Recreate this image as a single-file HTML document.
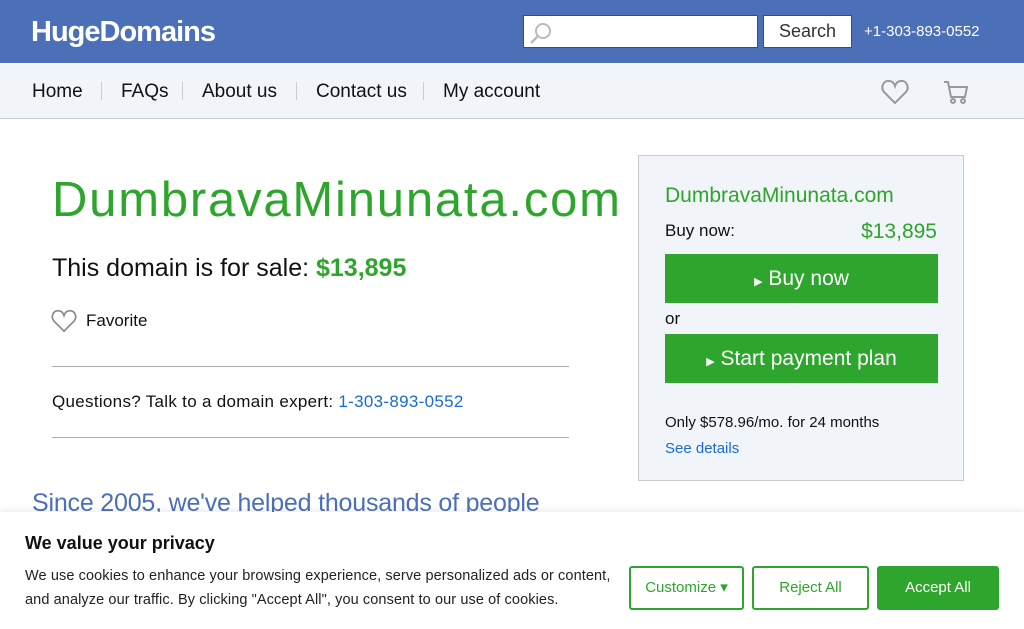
<!DOCTYPE html>
<html><head><meta charset="utf-8"><style>
*{margin:0;padding:0;box-sizing:border-box}
body{width:1024px;height:629px;overflow:hidden;font-family:"Liberation Sans",sans-serif;background:#fff;position:relative;color:#111}
.top{position:absolute;left:0;top:0;width:1024px;height:63px;background:#4b70b8}
.logo{position:absolute;left:31px;top:16px;color:#fff;font-weight:bold;font-size:29px;letter-spacing:-1px}
.sbox{position:absolute;left:523px;top:15px;width:235px;height:33px;background:#fff;border:1px solid #2d4f8f}
.sbtn{position:absolute;left:763px;top:15px;width:89px;height:33px;background:#fff;border:1px solid #2d4f8f;font-size:18px;text-align:center;line-height:31px;color:#333}
.phone{position:absolute;left:864px;top:23px;color:#fff;font-size:15px}
.nav{position:absolute;left:0;top:63px;width:1024px;height:56px;background:#f1f4f8;border-bottom:1px solid #c8ccd2}
.nav span{position:absolute;top:18px;font-size:19px;color:#111}
.sep{position:absolute;top:82px;width:1px;height:18px;background:#ccc}
h1{position:absolute;left:52px;top:172px;font-size:49px;font-weight:normal;color:#2ea52c;letter-spacing:1.8px}
.sale{position:absolute;left:52px;top:254px;font-size:25px}
.sale b{color:#2ea52c}
.fav{position:absolute;left:86px;top:311px;font-size:17px}
.hr{position:absolute;left:52px;width:517px;height:1px;background:#aaa}
.q{position:absolute;left:52px;top:392px;font-size:17px;letter-spacing:0.3px}
.q a{color:#1a6bd6;text-decoration:none}
.since{position:absolute;left:32px;top:489px;font-size:25px;color:#4b70b8;letter-spacing:-0.2px}
.card{position:absolute;left:638px;top:155px;width:326px;height:326px;background:#f1f4f8;border:1px solid #c8ccd2}
.card .d{position:absolute;left:26px;top:28px;font-size:21px;color:#2ea52c}
.card .bn{position:absolute;left:26px;top:65px;font-size:17px}
.card .pr{position:absolute;right:26px;top:64px;font-size:21px;color:#2ea52c}
.gb{position:absolute;left:26px;width:273px;height:49px;background:#2ea52c;color:#fff;font-size:21px;text-align:center;line-height:49px}
.card .or{position:absolute;left:26px;top:153px;font-size:17px}
.card .only{position:absolute;left:26px;top:258px;font-size:15px}
.card .see{position:absolute;left:26px;top:284px;font-size:15px;color:#1a6bd6}
.cookie{position:absolute;left:0;top:512px;width:1024px;height:117px;background:#fff;box-shadow:0 -2px 6px rgba(0,0,0,.08)}
.cookie h3{position:absolute;left:25px;top:21px;font-size:18px}
.cookie p{position:absolute;left:25px;top:52px;font-size:14.5px;line-height:24px;color:#222;width:600px;letter-spacing:0.1px}
.cb{position:absolute;top:54px;height:44px;border:2px solid #2ea52c;border-radius:3px;color:#2ea52c;font-size:15px;text-align:center;line-height:40px}
</style></head><body>
<div class="top">
<div class="logo">HugeDomains</div>
<div class="sbox"><svg width="26" height="26" style="position:absolute;left:4px;top:4px" viewBox="0 0 26 26"><circle cx="15" cy="11" r="7" fill="none" stroke="#bbb" stroke-width="2"/><line x1="10" y1="16" x2="3" y2="23" stroke="#bbb" stroke-width="2.5"/></svg></div>
<div class="sbtn">Search</div>
<div class="phone">+1-303-893-0552</div>
</div>
<div class="nav">
<span style="left:32px">Home</span><span style="left:121px">FAQs</span><span style="left:202px">About us</span><span style="left:316px">Contact us</span><span style="left:443px">My account</span>
<svg style="position:absolute;left:881px;top:16px" width="28" height="26" viewBox="0 0 28 26"><path d="M14 24 L3 13 C-1 8 3 1 8 2 C11 2 13 4 14 7 C15 4 17 2 20 2 C25 1 29 8 25 13 Z" fill="none" stroke="#999" stroke-width="2"/></svg>
<svg style="position:absolute;left:942px;top:16px" width="28" height="28" viewBox="0 0 28 28"><path d="M2 3 H6 L9 18 H23 L25 8 H7" fill="none" stroke="#999" stroke-width="2"/><circle cx="11" cy="22" r="2" fill="none" stroke="#999" stroke-width="2"/><circle cx="21" cy="22" r="2" fill="none" stroke="#999" stroke-width="2"/></svg>
</div>
<div class="sep" style="left:101px"></div><div class="sep" style="left:182px"></div><div class="sep" style="left:296px"></div><div class="sep" style="left:423px"></div>
<h1>DumbravaMinunata.com</h1>
<div class="sale">This domain is for sale: <b>$13,895</b></div>
<svg style="position:absolute;left:51px;top:309px" width="26" height="24" viewBox="0 0 28 26"><path d="M14 24 L3 13 C-1 8 3 1 8 2 C11 2 13 4 14 7 C15 4 17 2 20 2 C25 1 29 8 25 13 Z" fill="none" stroke="#888" stroke-width="1.8"/></svg>
<div class="fav">Favorite</div>
<div class="hr" style="top:366px"></div>
<div class="q">Questions? Talk to a domain expert: <a>1-303-893-0552</a></div>
<div class="hr" style="top:437px"></div>
<div class="since">Since 2005, we've helped thousands of people</div>
<div class="card">
<div class="d">DumbravaMinunata.com</div>
<div class="bn">Buy now:</div><div class="pr">$13,895</div>
<div class="gb" style="top:98px"><span style="font-size:11px">▶</span> Buy now</div>
<div class="or">or</div>
<div class="gb" style="top:178px"><span style="font-size:11px">▶</span> Start payment plan</div>
<div class="only">Only $578.96/mo. for 24 months</div>
<div class="see">See details</div>
</div>
<div class="cookie">
<h3>We value your privacy</h3>
<p>We use cookies to enhance your browsing experience, serve personalized ads or content, and analyze our traffic. By clicking "Accept All", you consent to our use of cookies.</p>
<div class="cb" style="left:629px;width:115px">Customize ▾</div>
<div class="cb" style="left:752px;width:117px">Reject All</div>
<div class="cb" style="left:877px;width:122px;background:#2ea52c;color:#fff">Accept All</div>
</div>
</body></html>
